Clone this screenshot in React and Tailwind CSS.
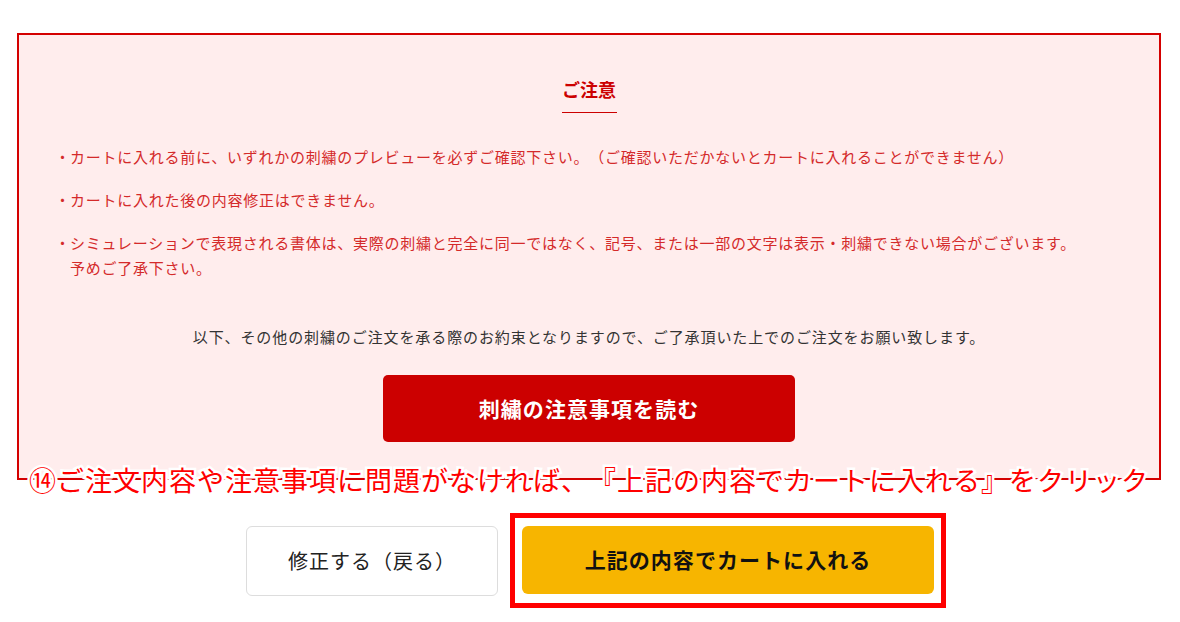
export default function App() {
  const notes = [
    "カートに入れる前に、いずれかの刺繍のプレビューを必ずご確認下さい。（ご確認いただかないとカートに入れることができません）",
    "カートに入れた後の内容修正はできません。",
    null,
  ];

  return (
    <div className="min-h-[622px] bg-white pt-[33px] font-['Noto_Sans_CJK_JP','Noto_Sans',sans-serif] [text-spacing-trim:space-all]">
      <div className="relative ml-[17px] w-[1144px] border-2 border-[#d40000] bg-[#ffeded] pt-[41px] pb-[36px]">
        {/* title */}
        <div className="flex flex-col items-center">
          <h2 className="text-[18px] leading-[26px] font-bold text-[#cc0000]">ご注意</h2>
          <div className="mt-[10px] h-px w-[55px] bg-[#cc0000]" />
        </div>

        <ul className="mt-[31px] space-y-[18px] pl-[36px] text-[15px] leading-[25px] tracking-[0.05em] text-[#d42a2a]">
          {notes.map((n, i) => (
            <li key={i} className="flex">
              <span className="w-[1em] shrink-0">・</span>
              {n ? (
                <span>{n}</span>
              ) : (
                <span>
                  シミュレーションで表現される書体は、実際の刺繍と完全に同一ではなく、記号、または一部の文字は表示・刺繍できない場合がございます。
                  <br />
                  予めご了承下さい。
                </span>
              )}
            </li>
          ))}
        </ul>

        <p className="mt-[44px] text-center text-[15px] leading-[25px] tracking-[0.06em] text-[#333]">
          以下、その他の刺繍のご注文を承る際のお約束となりますので、ご了承頂いた上でのご注文をお願い致します。
        </p>

        <div className="mt-[26px] flex justify-center">
          <button className="h-[67px] w-[412px] rounded-[5px] bg-[#cc0000] text-[21px] font-bold tracking-[0.05em] text-white">
            刺繍の注意事項を読む
          </button>
        </div>

        {/* step annotation over the bottom border */}
        <div className="absolute inset-x-0 bottom-[-2px] flex translate-y-1/2 justify-center">
          <span className="whitespace-nowrap text-[27px] leading-[34px] tracking-[1px] text-[#ff0000] [-webkit-text-stroke:5px_white] [paint-order:stroke_fill]">
            ⑭ご注文内容や注意事項に問題がなければ、『上記の内容でカートに入れる』をクリック
          </span>
        </div>
      </div>

      <div className="mt-[46px] flex justify-center gap-6">
        <button className="h-[70px] w-[252px] rounded-[6px] border border-[#dddddd] bg-white text-[20px] tracking-[0.05em] text-[#222]">
          修正する（戻る）
        </button>
        <div className="relative">
          <button className="h-[68px] w-[412px] rounded-[6px] bg-[#f7b500] text-[21px] font-bold tracking-[0.05em] text-[#111]">
            上記の内容でカートに入れる
          </button>
          <span className="pointer-events-none absolute -left-3 -right-3 top-[-13px] bottom-[-12px] border-[5px] border-[#ff0000]" />
        </div>
      </div>
    </div>
  );
}
